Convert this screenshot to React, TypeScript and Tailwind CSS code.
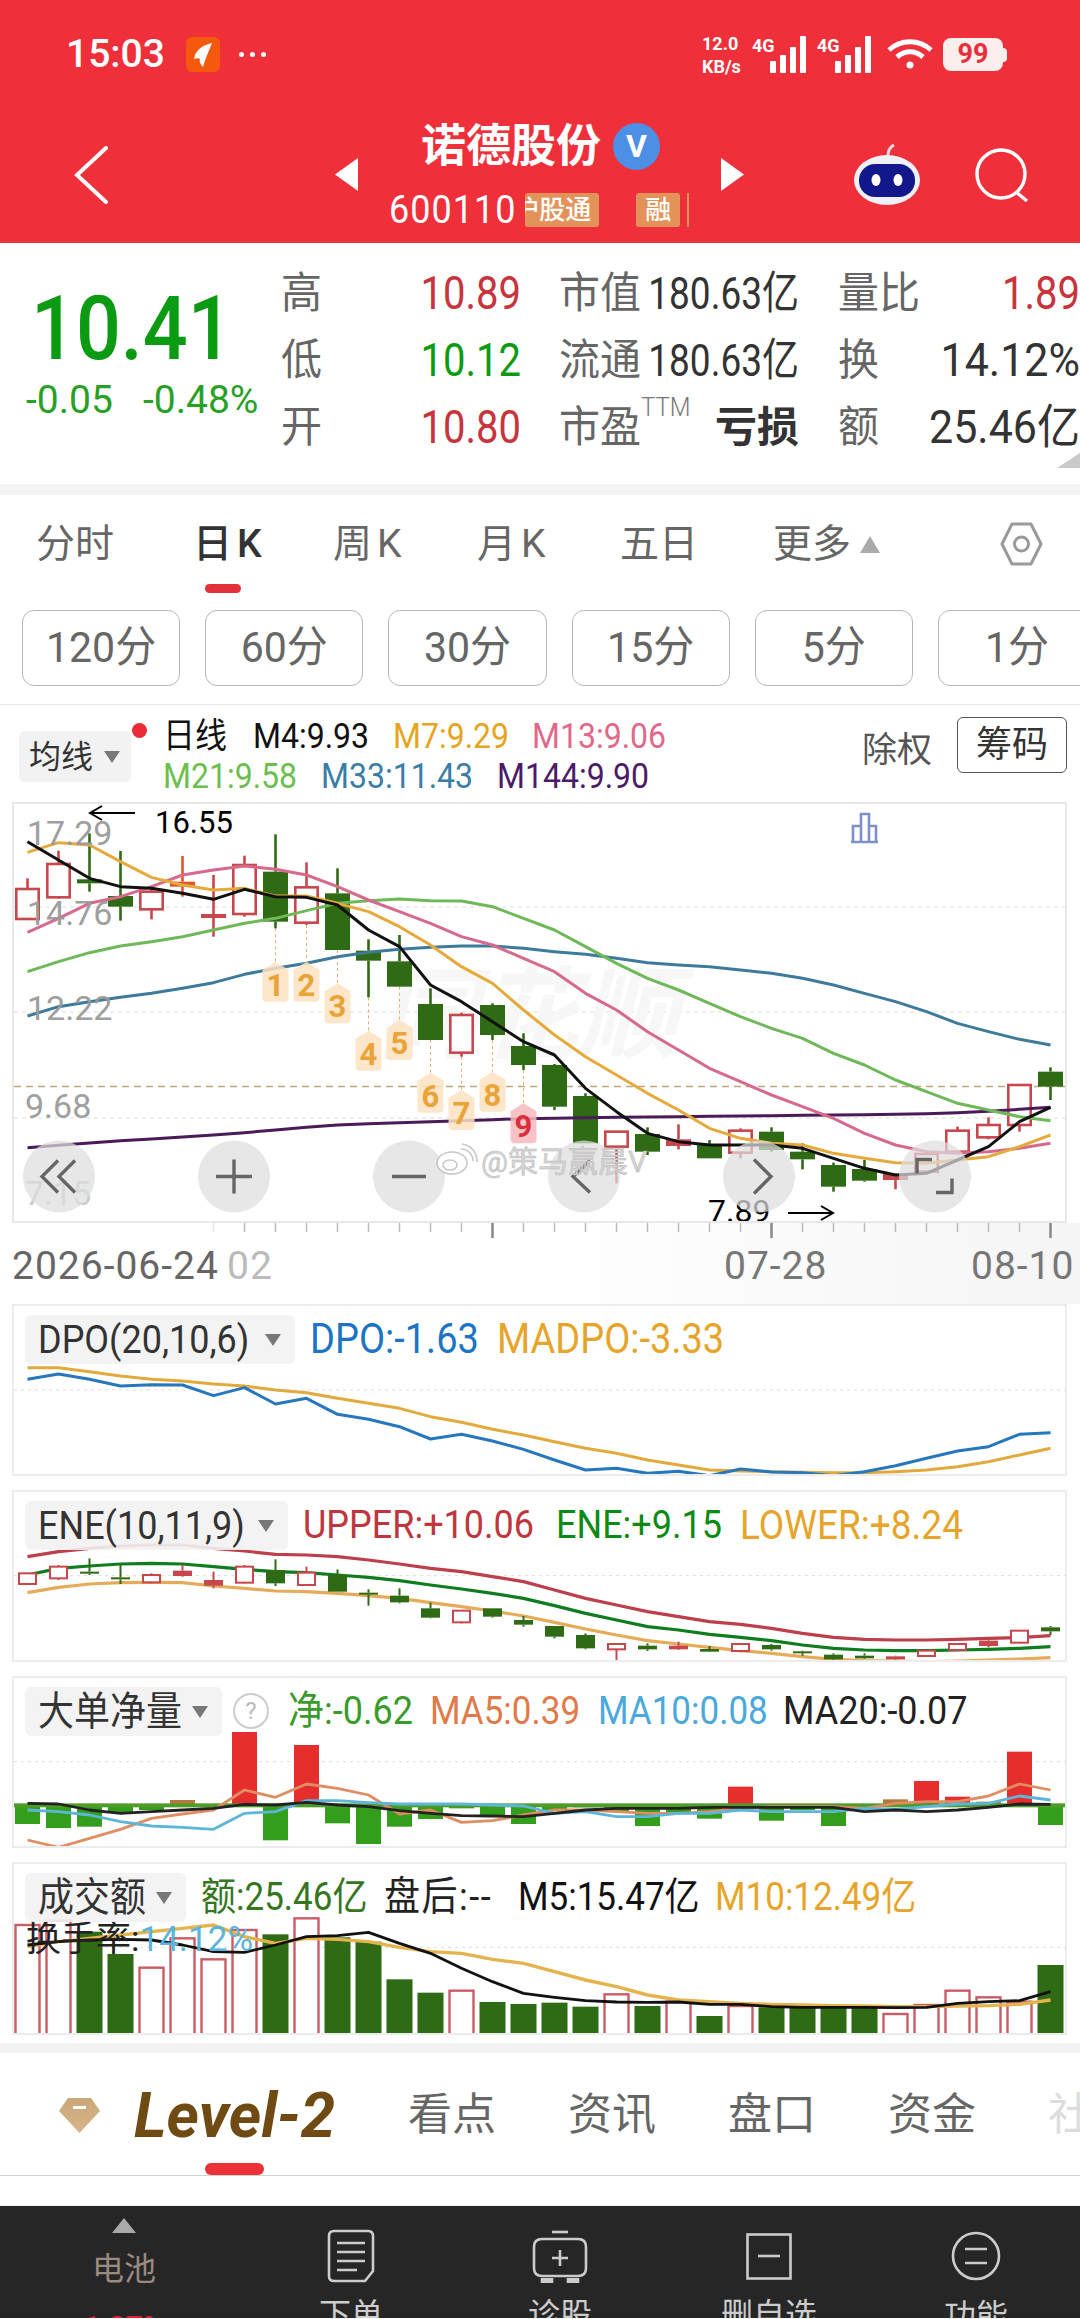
import React from 'react';

const X = (i: number) => 27.5 + 31 * i;

// main chart, values are read off a 3x crop whose top is at y=790
const mY = (z: number) => 790 + z / 3;

type Kind = 'h' | 'g' | 'r' | 'o';
const candles: [number, number, number, number, Kind][] = [
  [265, 297, 387, 390, 'h'], [182, 222, 322, 325, 'h'], [130, 268, 280, 305, 'g'], [183, 318, 350, 392, 'g'],
  [290, 305, 358, 388, 'h'], [198, 275, 290, 320, 'o'], [255, 372, 384, 440, 'r'], [197, 225, 372, 380, 'h'],
  [133, 245, 395, 415, 'g'], [217, 292, 398, 405, 'h'], [235, 310, 480, 480, 'g'], [448, 482, 512, 622, 'g'],
  [435, 514, 590, 590, 'g'], [595, 642, 750, 750, 'g'], [668, 675, 788, 800, 'h'], [640, 645, 735, 750, 'g'],
  [730, 768, 825, 840, 'g'], [822, 825, 950, 960, 'g'], [910, 918, 1060, 1060, 'g'], [1025, 1025, 1070, 1180, 'h'],
  [1012, 1032, 1085, 1095, 'g'], [1003, 1048, 1068, 1078, 'r'], [1050, 1065, 1105, 1105, 'g'], [1015, 1022, 1088, 1105, 'h'],
  [1012, 1025, 1080, 1085, 'g'], [1060, 1085, 1108, 1138, 'g'], [1118, 1125, 1190, 1205, 'g'], [1110, 1137, 1172, 1175, 'g'],
  [1150, 1152, 1170, 1198, 'r'], [1090, 1092, 1145, 1150, 'h'], [1010, 1022, 1085, 1085, 'h'], [982, 1005, 1042, 1048, 'h'],
  [885, 885, 1005, 1025, 'h'], [832, 845, 890, 930, 'g'],
];

const m4 = [155, 210, 265, 290, 295, 310, 328, 298, 320, 322, 345, 420, 470, 585, 635, 695, 755, 795, 895, 965, 1030, 1055, 1065, 1065, 1065, 1075, 1105, 1135, 1155, 1150, 1110, 1070, 995, 952];
const m7 = [187, 158, 165, 215, 262, 285, 300, 295, 318, 318, 340, 365, 410, 465, 530, 580, 660, 735, 800, 855, 910, 960, 1015, 1045, 1060, 1065, 1090, 1105, 1118, 1120, 1110, 1100, 1070, 1035];
const m13 = [427, 385, 340, 320, 290, 255, 240, 228, 238, 255, 290, 330, 365, 400, 440, 465, 505, 545, 610, 660, 725, 780, 835, 875, 915, 950, 985, 1030, 1065, 1085, 1090, 1085, 1075, 1060];
const m21 = [545, 515, 488, 468, 455, 440, 420, 400, 385, 362, 340, 332, 327, 332, 333, 350, 385, 420, 470, 520, 565, 600, 640, 680, 715, 745, 790, 825, 870, 905, 940, 960, 980, 992];
const m33 = [678, 650, 635, 622, 610, 595, 578, 553, 535, 520, 500, 487, 478, 472, 468, 468, 475, 485, 493, 505, 518, 525, 530, 540, 550, 565, 585, 610, 635, 665, 700, 725, 748, 765];
const m144 = [1073, 1066, 1059, 1052, 1047, 1041, 1035, 1028, 1020, 1012, 1005, 1001, 998, 995, 992, 989, 986, 985, 983, 982, 981, 980, 979, 978, 977, 976, 975, 974, 973, 971, 968, 964, 958, 952];

// tag top (crop units) per candle index
const tags: [number, number, string][] = [
  [8, 515, '1'], [9, 515, '2'], [10, 580, '3'], [11, 722, '4'], [12, 690, '5'], [13, 848, '6'], [14, 900, '7'], [15, 845, '8'], [16, 940, '9'],
];

const dpoB = [268, 252, 268, 288, 284, 285, 317, 293, 342, 325, 373, 388, 410, 447, 433, 453, 478, 510, 540, 535, 550, 544, 557, 537, 546, 548, 557, 545, 527, 505, 483, 470, 433, 428];
const dpoY = [233, 233, 245, 258, 268, 273, 282, 288, 300, 308, 325, 340, 355, 380, 397, 418, 435, 455, 475, 490, 510, 525, 540, 543, 545, 547, 548, 548, 545, 540, 530, 515, 495, 475];

const eneU = [800, 785, 775, 768, 765, 765, 775, 783, 793, 795, 800, 810, 822, 835, 845, 860, 875, 900, 925, 945, 965, 980, 995, 1003, 1015, 1030, 1042, 1048, 1050, 1050, 1048, 1045, 1043, 1037];
const eneM = [855, 835, 828, 822, 820, 822, 830, 838, 845, 848, 855, 862, 872, 885, 897, 910, 925, 947, 970, 990, 1010, 1020, 1033, 1042, 1052, 1065, 1075, 1080, 1082, 1082, 1080, 1078, 1075, 1070];
const eneL = [908, 892, 882, 878, 877, 878, 888, 895, 903, 905, 910, 917, 925, 938, 950, 963, 978, 997, 1017, 1035, 1052, 1062, 1072, 1082, 1090, 1100, 1108, 1112, 1113, 1115, 1113, 1110, 1107, 1103];
const eneC: [number, number, number, number, Kind][] = [
  [850, 850, 882, 882, 'h'], [825, 830, 865, 870, 'h'], [805, 845, 850, 855, 'g'], [825, 862, 868, 882, 'g'], [850, 855, 877, 880, 'h'],
  [825, 842, 858, 860, 'r'], [845, 870, 887, 895, 'r'], [825, 830, 878, 880, 'h'], [808, 840, 880, 888, 'g'], [830, 848, 885, 887, 'h'],
  [838, 855, 905, 905, 'g'], [898, 908, 914, 947, 'g'], [895, 917, 937, 940, 'g'], [938, 955, 983, 985, 'g'], [960, 962, 997, 1000, 'h'],
  [955, 955, 980, 983, 'g'], [978, 990, 1004, 1010, 'g'], [1008, 1008, 1040, 1045, 'g'], [1030, 1035, 1075, 1078, 'g'], [1062, 1062, 1078, 1110, 'h'],
  [1060, 1067, 1078, 1083, 'g'], [1055, 1067, 1078, 1080, 'r'], [1068, 1077, 1085, 1086, 'g'], [1060, 1062, 1083, 1087, 'h'], [1062, 1065, 1078, 1082, 'g'],
  [1082, 1084, 1088, 1097, 'g'], [1090, 1094, 1108, 1112, 'g'], [1090, 1097, 1105, 1107, 'g'], [1097, 1099, 1108, 1115, 'r'], [1080, 1082, 1098, 1100, 'h'],
  [1060, 1062, 1080, 1082, 'h'], [1048, 1052, 1068, 1072, 'r'], [1020, 1022, 1058, 1060, 'h'], [1008, 1012, 1024, 1035, 'g'],
];

const netV = [462, 474, 470, 428, 420, 390, 412, 186, 511, 225, 460, 522, 470, 447, 415, 435, 462, 420, 412, 425, 468, 430, 446, 350, 452, 420, 468, 415, 388, 333, 380, 395, 245, 465];
const ma5 = [510, 532, 505, 478, 445, 432, 420, 360, 382, 342, 355, 375, 432, 420, 457, 452, 435, 420, 420, 425, 430, 430, 425, 415, 410, 410, 410, 415, 400, 395, 395, 378, 342, 360];
const ma10 = [420, 425, 435, 455, 468, 472, 478, 430, 425, 392, 392, 398, 402, 402, 402, 405, 408, 430, 425, 440, 440, 430, 430, 420, 425, 425, 425, 415, 418, 410, 402, 400, 378, 390];
const ma20 = [400, 402, 420, 430, 425, 420, 415, 403, 405, 397, 405, 410, 422, 430, 437, 438, 440, 430, 420, 415, 415, 415, 412, 412, 412, 412, 412, 425, 420, 425, 420, 412, 402, 403];

const amtTop: [number, boolean][] = [
  [765, true], [752, true], [785, false], [852, false], [893, true], [805, true], [868, true], [780, true], [793, false], [745, true],
  [802, false], [815, false], [928, false], [968, false], [962, true], [996, false], [1002, false], [998, false], [1010, false], [973, true],
  [1008, false], [995, true], [1038, false], [1008, true], [1012, false], [1012, false], [1012, false], [1012, false], [1032, true], [1005, true],
  [962, true], [982, true], [995, true], [885, false],
];
const amtK = [825, 815, 810, 808, 810, 825, 845, 847, 825, 800, 797, 787, 820, 850, 895, 935, 970, 982, 992, 996, 997, 996, 1003, 1003, 1010, 1012, 1012, 1012, 1013, 1012, 1000, 995, 992, 965];
const amtY = [830, 815, 805, 795, 785, 775, 765, 800, 820, 805, 808, 815, 832, 845, 850, 868, 880, 905, 930, 950, 975, 990, 995, 1000, 1003, 1005, 1007, 1008, 1010, 1010, 1008, 1007, 1003, 990];

const linePath = (ys: number[], f: (z: number) => number) => ys.map((z, i) => `${i ? 'L' : 'M'}${X(i)} ${f(z)}`).join(' ');

function Line({ ys, f, color, w = 2.8 }: { ys: number[]; f: (z: number) => number; color: string; w?: number }) {
  return <path d={linePath(ys, f)} fill="none" stroke={color} strokeWidth={w} strokeLinejoin="round" />;
}

function Candle({ i, c, f, bw, sw }: { i: number; c: [number, number, number, number, Kind]; f: (z: number) => number; bw: number; sw: number }) {
  const [wt, bt, bb, wb, k] = c;
  const x = X(i);
  const color = k === 'g' ? '#2f6a14' : k === 'o' ? '#e2552c' : '#c8474d';
  const top = f(bt);
  const h = Math.max(f(bb) - top, 2);
  return (
    <g>
      <line x1={x} x2={x} y1={f(wt)} y2={top} stroke={color} strokeWidth={sw} />
      <line x1={x} x2={x} y1={top + h} y2={f(wb)} stroke={color} strokeWidth={sw} />
      {k === 'h' ? (
        <rect x={x - bw / 2 + sw / 2} y={top} width={bw - sw} height={h} fill="#fff" stroke={color} strokeWidth={sw} />
      ) : (
        <rect x={x - bw / 2} y={top} width={bw} height={h} fill={color} />
      )}
    </g>
  );
}

function Tag({ i, top, n }: { i: number; top: number; n: string }) {
  const x = X(i);
  const t = mY(top);
  const red = n === '9';
  return (
    <g>
      <path
        d={`M${x} ${t} L${x + 13} ${t + 8} V${t + 36} Q${x + 13} ${t + 40} ${x + 9} ${t + 40} H${x - 9} Q${x - 13} ${t + 40} ${x - 13} ${t + 36} V${t + 8} Z`}
        fill={red ? '#f7b9bd' : '#fde2bf'}
        opacity={0.85}
      />
      <text x={x} y={t + 34} textAnchor="middle" fontSize="31" fontWeight="700" fill={red ? '#d9303c' : '#e9a336'}>
        {n}
      </text>
    </g>
  );
}

function MainChart() {
  const axis: [string, number, number, string][] = [
    ['17.29', 27, 845, '#9a9a9a'], ['14.76', 27, 925, '#9a9a9a'], ['12.22', 27, 1020, '#9a9a9a'], ['9.68', 25, 1118, '#9a9a9a'], ['7.15', 25, 1205, '#c9c9c9'],
  ];
  const btn = [59, 234, 409, 584, 759, 935];
  const cy = 1176.5;
  return (
    <svg className="block w-[1051px] h-[417px]" viewBox="14 804 1051 417">
      {[907, 1012, 1118].map((y) => (
        <line key={y} x1="14" x2="1065" y1={y} y2={y} stroke="#dcdcdc" strokeWidth="1" strokeDasharray="4 4" />
      ))}
      <text x="378" y="1050" fontSize="100" fontWeight="700" fontStyle="italic" fill="#f7f7f7">同花顺</text>
      <line x1="14" x2="1065" y1="1086.5" y2="1086.5" stroke="#bfa878" strokeWidth="1.5" strokeDasharray="7 5" />
      {tags.map(([i, top]) => (
        <line key={i} x1={X(i)} x2={X(i)} y1={mY(candles[i][3])} y2={mY(top)} stroke="#e8ac74" strokeWidth="1" strokeDasharray="3 3" />
      ))}
      {candles.map((c, i) => (
        <Candle key={i} i={i} c={c} f={mY} bw={25} sw={2.6} />
      ))}
      <Line ys={m144} f={mY} color="#4b1a58" w={3} />
      <Line ys={m33} f={mY} color="#3e7a9c" w={3} />
      <Line ys={m21} f={mY} color="#6fb85a" w={3} />
      <Line ys={m13} f={mY} color="#d76a8c" w={3} />
      <Line ys={m7} f={mY} color="#e6aa3c" w={3} />
      <Line ys={m4} f={mY} color="#111" w={3} />
      {axis.map(([t, x, y, c]) => (
        <text key={t} x={x} y={y} fontSize="34" fill={c} opacity="0.95">{t}</text>
      ))}
      {tags.map(([i, top, n]) => (
        <Tag key={n} i={i} top={top} n={n} />
      ))}

      <path d="M135 813H92M102 806L90 813L102 820" fill="none" stroke="#000" strokeWidth="2" />
      <text x="155" y="833" fontSize="31" fill="#000">16.55</text>
      <text x="708" y="1222" fontSize="32" fill="#000">7.89</text>
      <path d="M788 1213H832M821 1206L833 1213L821 1220" fill="none" stroke="#000" strokeWidth="2" />

      <path d="M853 841V826H861V841M861 841V814H869V841M869 841V826H876V841M851 842H878" fill="none" stroke="#7d90c9" strokeWidth="2.6" />

      {btn.map((x) => (
        <circle key={x} cx={x} cy={1176.5} r="36" fill="#dedede" opacity="0.72" />
      ))}
      <g fill="none" stroke="#666" strokeWidth="3.4">
        <path d={`M58 ${cy - 16} L42 ${cy} L58 ${cy + 16} M75 ${cy - 16} L59 ${cy} L75 ${cy + 16}`} />
        <path d={`M216 ${cy}H252M234 ${cy - 17}V${cy + 17}`} />
        <path d={`M392 ${cy}H426`} />
        <path d={`M590 ${cy - 16} L573 ${cy} L590 ${cy + 16}`} />
        <path d={`M754 ${cy - 17} L771 ${cy} L754 ${cy + 17}`} />
        <path d={`M932 ${cy - 17}H917V${cy - 3}M952 ${cy + 2}V${cy + 16}H936`} />
      </g>

      <g fill="#fff" stroke="#c8c8c8" strokeWidth="1.6">
        <ellipse cx="452" cy="1163" rx="15" ry="11" />
        <ellipse cx="450" cy="1165" rx="7" ry="5" fill="none" />
        <path d="M461 1149a12 12 0 0 1 12 12M462 1144a17 17 0 0 1 15 18" fill="none" />
      </g>
      <text x="481" y="1172" fontSize="30" fill="#d4d4d4" stroke="#bbb" strokeWidth="0.5">@策马赢晨V</text>
    </svg>
  );
}

function Caret() {
  return (
    <svg width="16" height="12" viewBox="0 0 16 12" className="shrink-0">
      <path d="M0 0H16L8 12Z" fill="#777" />
    </svg>
  );
}

function Panel({
  h,
  top,
  box,
  label,
  help,
  items,
  children,
}: {
  h: string;
  top: number;
  box: string;
  label: string;
  help?: boolean;
  items: { t: string; c: string }[];
  children: React.ReactNode;
}) {
  const inner = h === 'h-[173px]' ? 169 : 168;
  return (
    <div className={`ml-3 w-[1055px] border-2 border-[#ececec] grid ${h}`}>
      <svg className="block [grid-area:1/1] w-[1051px]" height={inner} viewBox={`14 ${top + 2} 1051 ${inner}`}>
        {children}
      </svg>
      <div className="[grid-area:1/1] flex items-start pt-[9px] pl-[11px] relative">
        <div className={`${box} h-[49px] bg-[#f2f2f2]/90 rounded-md flex items-center justify-between pl-[13px] pr-[14px] text-[#333] whitespace-nowrap`}>
          <span className="text-[36px] scale-y-[1.1]">{label}</span>
          <Caret />
        </div>
        {help && (
          <span className="ml-[11px] mt-[6px] w-[36px] h-[36px] shrink-0 rounded-full border-2 border-[#ccc] flex items-center justify-center text-[24px] text-[#bbb]">?</span>
        )}
        {items.map((it) => (
          <span key={it.t} className={`${it.c} shrink-0 h-[49px] leading-[49px] scale-y-[1.1] whitespace-nowrap`}>
            {it.t}
          </span>
        ))}
      </div>
    </div>
  );
}

function Signal() {
  return (
    <svg width="57" height="37" viewBox="0 0 57 37">
      <text x="0" y="16" fontSize="18" fontWeight="700" fill="#fff">4G</text>
      <g fill="#fff">
        <rect x="18" y="25" width="6" height="12" rx="1" />
        <rect x="28" y="19" width="6" height="18" rx="1" />
        <rect x="38" y="11" width="6" height="26" rx="1" />
        <rect x="48" y="0" width="6" height="37" rx="1" />
      </g>
    </svg>
  );
}

function StatusBar() {
  return (
    <div className="flex items-center h-[35px] mt-[37px] pl-[66px] text-white">
      <span className="w-[120px] text-[39px] font-medium leading-none">15:03</span>
      <div className="w-[34px] h-[35px] rounded-md bg-[#f4590e] flex items-center justify-center">
        <svg width="22" height="26" viewBox="0 0 22 26">
          <path d="M20 1C10 3 3 9 2 17c3-1 5-1 6 0-1 2 0 5 3 8 2-8 6-16 9-24Z" fill="#fff" />
        </svg>
      </div>
      <div className="flex gap-[6px] ml-[19px]">
        <span className="w-[5px] h-[5px] rounded-full bg-white" />
        <span className="w-[5px] h-[5px] rounded-full bg-white" />
        <span className="w-[5px] h-[5px] rounded-full bg-white" />
      </div>
      <div className="ml-auto flex items-center mr-[73px]">
        <div className="w-[50px] flex flex-col text-[18px] font-bold leading-[23px]">
          <span>12.0</span>
          <span>KB/s</span>
        </div>
        <Signal />
        <div className="ml-2">
          <Signal />
        </div>
        <svg width="46" height="32" viewBox="0 0 46 32" className="ml-[13px]" fill="none" stroke="#fff" strokeWidth="5">
          <path d="M2 11C14 0 32 0 44 11" />
          <path d="M10 18C18 11 28 11 36 18" />
          <circle cx="23" cy="26" r="3.5" fill="#fff" stroke="none" />
        </svg>
        <div className="ml-[10px] w-[60px] h-[33px] rounded-lg bg-[#fdeeee] text-[#e8303a] text-[27px] font-bold leading-[33px] text-center">99</div>
        <span className="w-[4px] h-[14px] bg-[#fdeeee] rounded-r" />
      </div>
    </div>
  );
}

function Robot() {
  return (
    <svg width="70" height="62" viewBox="0 0 70 62">
      <path d="M36 12C36 6 38 3 42 1" fill="none" stroke="#f3d9dc" strokeWidth="3" />
      <ellipse cx="35" cy="36" rx="33" ry="25" fill="#eef2f8" />
      <rect x="7" y="20" width="56" height="33" rx="16" fill="#10188c" />
      <ellipse cx="24" cy="36" rx="4.5" ry="6" fill="#fff" />
      <ellipse cx="46" cy="36" rx="4.5" ry="6" fill="#fff" />
    </svg>
  );
}

function NavBar() {
  return (
    <div className="flex items-center h-[105px] mt-[50px] text-white">
      <svg width="34" height="58" viewBox="0 0 34 58" className="ml-[74px]" fill="none" stroke="#fff" strokeWidth="4" strokeLinecap="round">
        <path d="M32 2L3 29L32 56" />
      </svg>
      <svg width="23" height="33" viewBox="0 0 23 33" className="ml-[227px]">
        <path d="M23 0V33L0 16.5Z" fill="#fff" />
      </svg>
      <div className="ml-[31px] w-[300px] flex flex-col">
        <div className="flex items-center pl-[32px] h-[48px]">
          <span className="text-[45px] font-bold leading-none whitespace-nowrap">诺德股份</span>
          <span className="ml-[12px] w-[47px] h-[47px] rounded-full bg-[#4c8fe4] flex items-center justify-center text-[32px] font-bold">V</span>
        </div>
        <div className="flex items-center mt-[23px] h-[34px]">
          <span className="w-[137px] text-[36px] leading-none tracking-[1px] scale-y-[1.08] origin-left">600110</span>
          <span className="w-[75px] h-[34px] bg-[#e3935a] rounded-[3px] overflow-hidden flex justify-end pr-[8px] text-[26px] leading-[34px] font-medium whitespace-nowrap">沪股通</span>
          <span className="ml-[37px] w-[44px] h-[34px] bg-[#e3935a] rounded-[3px] text-center text-[26px] leading-[34px] font-medium">融</span>
          <span className="ml-[7px] w-[2px] h-[34px] bg-[#e3935a]" />
        </div>
      </div>
      <svg width="23" height="33" viewBox="0 0 23 33" className="ml-[32px]">
        <path d="M0 0V33L23 16.5Z" fill="#fff" />
      </svg>
      <div className="ml-[108px]">
        <Robot />
      </div>
      <svg width="58" height="56" viewBox="0 0 58 56" className="ml-[52px]" fill="none" stroke="#fff" strokeWidth="3.4">
        <circle cx="27" cy="27" r="24" />
        <path d="M42 45L53 54" />
      </svg>
    </div>
  );
}

const RED = 'text-[#c8343c]';
const GRN = 'text-[#0b9b12]';

function Quote() {
  const label = 'text-[41px] text-[#666] leading-none scale-y-[1.05]';
  const val = 'text-[40px] leading-none scale-y-[1.15]';
  const mid = 'text-[37px] text-[#333] leading-none whitespace-nowrap scale-y-[1.22]';
  const big = 'text-[43px] text-[#333] leading-none whitespace-nowrap scale-y-[1.08]';
  const rows = [
    [
      <span className={label}>高</span>, <span className={`${val} ${RED}`}>10.89</span>,
      <span className={label}>市值</span>, <span className={mid}>180.63亿</span>,
      <span className={label}>量比</span>, <span className={`${val} ${RED}`}>1.89</span>,
    ],
    [
      <span className={label}>低</span>, <span className={`${val} ${GRN}`}>10.12</span>,
      <span className={label}>流通</span>, <span className={mid}>180.63亿</span>,
      <span className={label}>换</span>, <span className={big}>14.12%</span>,
    ],
    [
      <span className={label}>开</span>, <span className={`${val} ${RED}`}>10.80</span>,
      <span className={`${label} whitespace-nowrap`}>市盈<sup className="text-[24px] font-light text-[#777] align-[12px]">TTM</sup></span>,
      <span className="text-[42px] text-[#333] leading-none font-bold">亏损</span>,
      <span className={label}>额</span>, <span className={big}>25.46亿</span>,
    ],
  ];
  return (
    <div className="relative flex h-[241px] pt-[17px] overflow-hidden">
      <div className="w-[281px] shrink-0">
        <div className={`pl-[31px] pt-[30px] text-[79px] leading-[74px] font-medium scale-y-[1.12] ${GRN}`}>10.41</div>
        <div className="flex pl-[26px] pt-[16px] text-[39px] leading-[40px] text-[#28a028]">
          <span className="w-[117px]">-0.05</span>
          <span>-0.48%</span>
        </div>
      </div>
      <div className="grid grid-cols-[240px_38px_240px_39px_242px] auto-rows-[67px] w-[799px]">
        {rows.map((r, ri) => (
          <React.Fragment key={ri}>
            <div className="flex items-center justify-between">{r[0]}{r[1]}</div>
            <div />
            <div className="flex items-center justify-between">{r[2]}{r[3]}</div>
            <div />
            <div className="flex items-center justify-between">{r[4]}{r[5]}</div>
          </React.Fragment>
        ))}
      </div>
      <svg width="23" height="15" viewBox="0 0 23 15" className="absolute right-0 bottom-[16px]">
        <path d="M23 0V15H0Z" fill="#c9c9c9" />
      </svg>
    </div>
  );
}

function Periods() {
  const tabs = ['分时', '日K', '周K', '月K', '五日'];
  return (
    <div className="h-[98px] pt-[25px] pl-[36px] grid grid-cols-[157px_140px_144px_143px_153px_227px_43px] text-[39px] leading-[48px] text-[#666]">
      {tabs.map((t) => (
        <div key={t} className="flex flex-col">
          <span className={`${t === '日K' ? 'text-[#333] font-medium' : ''} ${t.endsWith('K') ? 'tracking-[5px]' : ''}`}>{t}</span>
          {t === '日K' && <span className="mt-4 ml-3 w-[36px] h-[9px] rounded-full bg-[#e3303a]" />}
        </div>
      ))}
      <div className="flex items-center h-[48px]">
        <span>更多</span>
        <svg width="20" height="17" viewBox="0 0 20 17" className="ml-[9px]">
          <path d="M10 0L20 17H0Z" fill="#aaa" />
        </svg>
      </div>
      <svg width="43" height="44" viewBox="0 0 43 44" className="self-start mt-[2px]" fill="none" stroke="#999" strokeWidth="3">
        <path d="M12 2H31L41 22L31 42H12L2 22Z" strokeLinejoin="round" />
        <circle cx="21.5" cy="22" r="7" />
      </svg>
    </div>
  );
}

function RangeButtons() {
  const items = ['120分', '60分', '30分', '15分', '5分', '1分'];
  return (
    <div className="flex gap-[25px] pl-[22px] pt-[17px] pb-[18px] border-b border-[#e6e6e6] overflow-hidden">
      {items.map((t) => (
        <div key={t} className="w-[158.2px] h-[76px] shrink-0 rounded-xl border border-[#b5b5b5] flex items-center justify-center text-[41px] text-[#666]">
          <span className="scale-y-[1.05]">{t}</span>
        </div>
      ))}
    </div>
  );
}

function Legend() {
  return (
    <div className="flex items-start h-[97px] whitespace-nowrap">
      <div className="ml-[19px] mt-[26px] w-[112px] h-[51px] bg-[#f2f2f2] rounded-md flex items-center justify-between pl-[10px] pr-[11px] text-[32px] text-[#333]">
        <span>均线</span>
        <Caret />
      </div>
      <span className="mt-[18px] ml-[1px] w-[15px] h-[15px] rounded-full bg-[#ec2b38]" />
      <div className="ml-[16px] mt-[11px] text-[32px] leading-[40px]">
        <div className="flex text-[#111]">
          <span className="w-[90px] scale-y-[1.1] origin-left">日线</span>
          <span className="w-[140px] scale-y-[1.1] origin-left">M4:9.93</span>
          <span className="w-[139px] text-[#e6a520] scale-y-[1.1] origin-left">M7:9.29</span>
          <span className="text-[#e2688a] scale-y-[1.1] origin-left">M13:9.06</span>
        </div>
        <div className="flex">
          <span className="w-[158px] text-[#6cbf4e] scale-y-[1.1] origin-left">M21:9.58</span>
          <span className="w-[176px] text-[#3a7ea8] scale-y-[1.1] origin-left">M33:11.43</span>
          <span className="text-[#4b1a68] scale-y-[1.1] origin-left">M144:9.90</span>
        </div>
      </div>
      <span className="ml-auto mt-[26px] text-[35px] leading-[40px] text-[#555]">除权</span>
      <div className="ml-[25px] mr-[13px] mt-[12px] w-[110px] h-[56px] rounded-md border border-[#555] flex items-center justify-center text-[36px] text-[#333]">
        筹码
      </div>
    </div>
  );
}

function DateAxis() {
  return (
    <div className="h-[81px] bg-linear-to-r from-white via-white to-[#f5f5f5]">
      <svg className="block" width="1080" height="16" viewBox="0 0 1080 16">
        {candles.map((_, i) =>
          i > 5 ? (
            <line key={i} x1={X(i)} x2={X(i)} y1="0" y2={i === 15 || i === 24 || i === 33 ? 15 : 9} stroke={i === 6 ? '#e4e4e4' : i === 15 || i === 24 || i === 33 ? '#888' : '#bbb'} strokeWidth={i === 15 || i === 24 || i === 33 ? 2.5 : 1.5} />
          ) : null,
        )}
      </svg>
      <div className="flex items-center h-[52px] mt-[1px] text-[39px] tracking-[1px] text-[#666] whitespace-nowrap">
        <span className="ml-[12px] w-[215px] shrink-0">2026-06-24</span>
        <span className="w-[497px] shrink-0 text-[#bbb]">02</span>
        <span className="w-[247px] shrink-0 text-[#777]">07-28</span>
        <span className="text-[#777]">08-10</span>
      </div>
    </div>
  );
}

function SubCharts() {
  const dY = (z: number) => 1290 + z / 3;
  const nY = (z: number) => 1670 + z / 3;
  return (
    <div className="flex flex-col gap-[14px]">
      <Panel
        h="h-[172px]"
        top={1304}
        box="w-[270px]"
        label="DPO(20,10,6)"
        items={[
          { t: 'DPO:-1.63', c: 'ml-[15px] w-[187px] text-[38px] text-[#1c74c4]' },
          { t: 'MADPO:-3.33', c: 'text-[38px] text-[#e6a52a]' },
        ]}
      >
        <line x1="14" x2="1065" y1={dY(300)} y2={dY(300)} stroke="#ddd" strokeDasharray="3 4" />
        <Line ys={dpoY} f={dY} color="#e2aa3c" w={3} />
        <Line ys={dpoB} f={dY} color="#2677bd" w={3} />
      </Panel>
      <Panel
        h="h-[172px]"
        top={1490}
        box="w-[263px]"
        label="ENE(10,11,9)"
        items={[
          { t: 'UPPER:+10.06', c: 'ml-[15px] w-[253px] text-[36px] text-[#c0363e]' },
          { t: 'ENE:+9.15', c: 'w-[184px] text-[36px] text-[#0b8a14]' },
          { t: 'LOWER:+8.24', c: 'text-[37px] text-[#e6a52a]' },
        ]}
      >
        <line x1="14" x2="1065" y1={dY(857)} y2={dY(857)} stroke="#ddd" strokeDasharray="3 4" />
        <Line ys={eneU} f={dY} color="#bd3f4b" w={3.2} />
        <Line ys={eneM} f={dY} color="#0f7d1f" w={3.2} />
        <Line ys={eneL} f={dY} color="#e5ab58" w={3.2} />
        {eneC.map((c, i) => (
          <Candle key={i} i={i} c={c} f={dY} bw={19} sw={2} />
        ))}
      </Panel>
      <Panel
        h="h-[172px]"
        top={1676}
        box="w-[197px]"
        label="大单净量"
        help
        items={[
          { t: '净:-0.62', c: 'ml-[19px] w-[142px] text-[36px] text-[#3a9a2a]' },
          { t: 'MA5:0.39', c: 'w-[168px] text-[35px] text-[#e07a4a]' },
          { t: 'MA10:0.08', c: 'w-[185px] text-[35px] text-[#4aa8dc]' },
          { t: 'MA20:-0.07', c: 'text-[36px] text-[#222]' },
        ]}
      >
        <line x1="14" x2="1065" y1={nY(275)} y2={nY(275)} stroke="#ddd" strokeDasharray="3 4" />
        {netV.map((z, i) => {
          const up = z < 405;
          return (
            <rect
              key={i}
              x={X(i) - 12.5}
              y={nY(Math.min(z, 405))}
              width="25"
              height={Math.abs(z - 405) / 3}
              fill={up ? (z > 385 ? '#b5793f' : '#e62e2e') : '#339d1c'}
            />
          );
        })}
        <rect x="14" y={nY(400)} width="1051" height="4" fill="#4f9c2b" />
        <Line ys={ma5} f={nY} color="#e08d62" />
        <Line ys={ma10} f={nY} color="#5db5d9" />
        <Line ys={ma20} f={nY} color="#222" />
      </Panel>
      <Panel
        h="h-[173px]"
        top={1862}
        box="w-[161px]"
        label="成交额"
        items={[
          { t: '额:25.46亿', c: 'ml-[15px] w-[183px] text-[35px] text-[#35761f]' },
          { t: '盘后:--', c: 'w-[134px] text-[36px] tracking-[1.5px] text-[#222]' },
          { t: 'M5:15.47亿', c: 'w-[197px] text-[35px] text-[#111]' },
          { t: 'M10:12.49亿', c: 'text-[35px] text-[#e6a52a]' },
        ]}
      >
        <line x1="14" x2="1065" y1={nY(832)} y2={nY(832)} stroke="#ddd" strokeDasharray="3 4" />
        {amtTop.map(([z, hollow], i) =>
          hollow ? (
            <rect key={i} x={X(i) - 12} y={nY(z)} width="24" height={(1095 - z) / 3} fill="#fff" stroke="#c95c64" strokeWidth="2.4" />
          ) : (
            <rect key={i} x={X(i) - 13} y={nY(z)} width="26" height={(1097 - z) / 3 + 2} fill="#2f6a14" />
          ),
        )}
        <Line ys={amtY} f={nY} color="#e4b44c" w={3.4} />
        <Line ys={amtK} f={nY} color="#111" />
        <text x="26" y="1951" fontSize="35" fill="#222">换手率:<tspan fill="#5ab4dc">14.12%</tspan></text>
      </Panel>
    </div>
  );
}

function BottomTabs() {
  return (
    <div className="h-[123px] pt-[32px] border-b border-[#cfcfcf]">
      <div className="flex items-center h-[60px] text-[44px] text-[#666] whitespace-nowrap overflow-hidden">
        <svg width="41" height="35" viewBox="0 0 41 35" className="ml-[59px] shrink-0">
          <defs>
            <linearGradient id="gem" x1="0" y1="0" x2="0" y2="1">
              <stop offset="0" stopColor="#c9a877" />
              <stop offset="1" stopColor="#d6b48a" />
            </linearGradient>
          </defs>
          <path d="M9 0H32L41 13L20.5 35L0 13Z" fill="url(#gem)" />
          <rect x="14" y="8" width="13" height="3" fill="#fff" />
        </svg>
        <span className="ml-[34px] w-[274px] shrink-0 text-[62px] font-bold italic text-[#6f4a12]">Level-2</span>
        <span className="w-[160px] shrink-0">看点</span>
        <span className="w-[160px] shrink-0">资讯</span>
        <span className="w-[160px] shrink-0">盘口</span>
        <span className="w-[160px] shrink-0">资金</span>
        <span className="shrink-0 text-[#ddd]">社区</span>
      </div>
      <div className="ml-[205px] mt-[18px] w-[59px] h-[12px] rounded-full bg-[#ec3238]" />
    </div>
  );
}

function BottomBar() {
  const text = 'text-[32px] leading-[40px] text-[#ccc] whitespace-nowrap';
  return (
    <div className="h-[112px] bg-[#262626] overflow-hidden grid grid-cols-[248px_206px_212px_206px_208px]">
      <div className="flex flex-col items-center pt-[12px]">
        <svg width="24" height="15" viewBox="0 0 24 15">
          <path d="M12 0L24 15H0Z" fill="#aaa" />
        </svg>
        <span className="mt-[16px] text-[32px] leading-[40px] text-[#9a8a80]">电池</span>
        <span className="mt-[20px] text-[30px] leading-[36px] font-medium text-[#e8202c]">1.27%</span>
      </div>
      <div className="flex flex-col items-center pt-[23px]">
        <svg width="48" height="54" viewBox="0 0 48 54" fill="none" stroke="#ccc" strokeWidth="2.6">
          <path d="M7 2H41Q46 2 46 7V42L38 52H7Q2 52 2 47V7Q2 2 7 2Z" />
          <path d="M10 14H38M10 23H38M10 32H38M10 41H30" />
        </svg>
        <span className={`${text} mt-[12px]`}>下单</span>
      </div>
      <div className="flex flex-col items-center pt-[24px]">
        <svg width="56" height="53" viewBox="0 0 56 53" fill="none" stroke="#ccc" strokeWidth="2.6">
          <path d="M20 2H36" />
          <path d="M10 9H46Q54 9 54 17V38Q54 46 46 46H10Q2 46 2 38V17Q2 9 10 9Z" />
          <path d="M28 20V36M20 28H36" />
          <path d="M10 48V52H20V48M36 48V52H46V48" fill="#ccc" />
        </svg>
        <span className={`${text} mt-[12px]`}>诊股</span>
      </div>
      <div className="flex flex-col items-center pt-[27px]">
        <svg width="46" height="47" viewBox="0 0 46 47" fill="none" stroke="#ccc" strokeWidth="2.6">
          <rect x="1.5" y="1.5" width="43" height="44" />
          <path d="M12 23H34" />
        </svg>
        <span className={`${text} mt-[15px]`}>删自选</span>
      </div>
      <div className="flex flex-col items-center pt-[25px]">
        <svg width="50" height="50" viewBox="0 0 50 50" fill="none" stroke="#ccc" strokeWidth="2.6">
          <circle cx="25" cy="25" r="23" />
          <path d="M14 18H36M14 32H36" />
        </svg>
        <span className={`${text} mt-[15px]`}>功能</span>
      </div>
    </div>
  );
}

export default function App() {
  return (
    <div className="w-[1080px] h-[2319px] overflow-hidden bg-white font-[Roboto,'Noto_Sans_CJK_SC',sans-serif]">
      <div className="h-[243px] bg-[#ef303b] overflow-hidden">
        <StatusBar />
        <NavBar />
      </div>
      <Quote />
      <div className="h-[11px] bg-[#f4f4f4]" />
      <Periods />
      <RangeButtons />
      <Legend />
      <div className="ml-3 w-[1055px] border-2 border-[#e8e8e8] h-[421px]">
        <MainChart />
      </div>
      <DateAxis />
      <SubCharts />
      <div className="mt-2 h-[10px] bg-[#f4f4f4]" />
      <BottomTabs />
      <div className="h-[30px] border-b border-[#f0f0f0]" />
      <BottomBar />
    </div>
  );
}
